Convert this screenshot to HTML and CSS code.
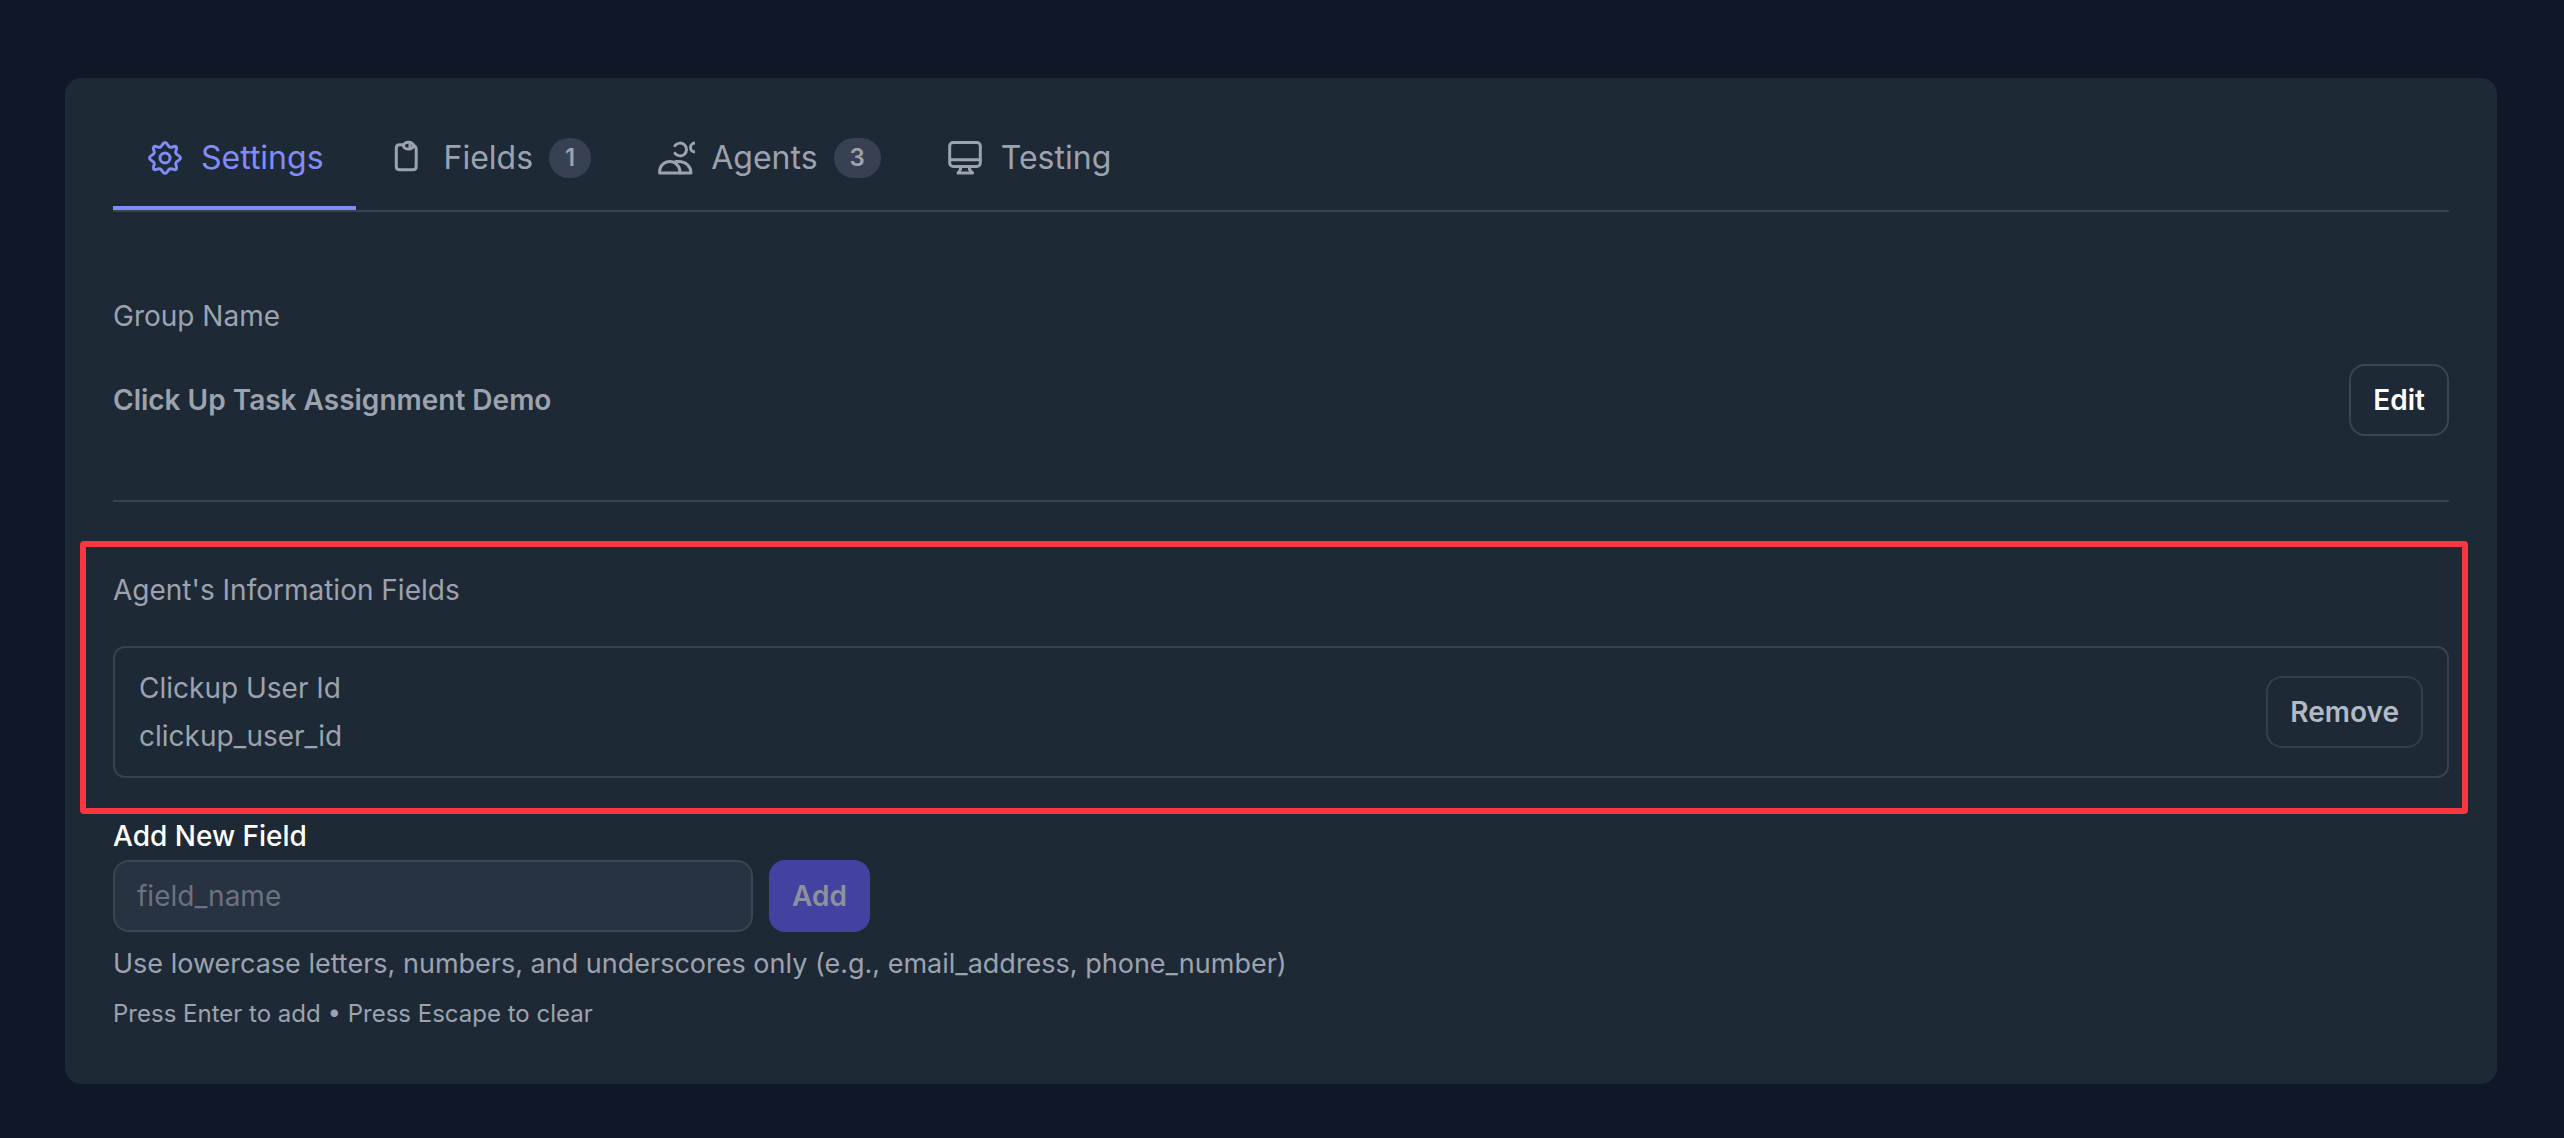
FILE: index.html
```html
<!DOCTYPE html>
<html lang="en">
<head>
<meta charset="utf-8">
<meta name="viewport" content="width=device-width, initial-scale=1">
<title>Group Settings</title>
<link rel="stylesheet" href="styles.css">
</head>
<body>
<main class="page">
  <div class="card">
    <nav class="tabs" aria-label="Group sections">
      <button class="tab tab-active" type="button">
        <svg class="icon" viewBox="0 0 40 40" aria-hidden="true">
          <path d="M20 4.500C22.600 4.500 22.800 8.500 25 9.200C27.200 10 29.400 7.100 31.200 8.800C32.900 10.600 30 12.800 30.800 15C31.500 17.200 35.500 17.400 35.500 20C35.500 22.600 31.500 22.800 30.800 25C30 27.200 32.900 29.400 31.200 31.200C29.400 32.900 27.200 30 25 30.800C22.800 31.500 22.600 35.500 20 35.500C17.400 35.500 17.200 31.500 15 30.800C12.800 30 10.600 32.900 8.800 31.200C7.100 29.400 10 27.200 9.200 25C8.500 22.800 4.500 22.600 4.500 20C4.500 17.400 8.500 17.200 9.200 15C10 12.800 7.100 10.600 8.800 8.800C10.600 7.100 12.800 10 15 9.200C17.200 8.500 17.400 4.500 20 4.500Z"/>
          <circle cx="20" cy="20" r="5"/>
        </svg>
        Settings
      </button>
      <button class="tab" type="button">
        <svg class="icon" viewBox="0 0 40 40" aria-hidden="true">
          <path d="M15 6.800H11.500Q8.300 6.800 8.300 10V28.600Q8.300 31.800 11.500 31.800H25Q28.200 31.800 28.200 28.600V11Q28.200 9 26.500 7.800"/>
          <ellipse cx="20.500" cy="7.700" rx="5" ry="3.400"/>
          <path d="M22 6.500V9"/>
        </svg>
        Fields
        <span class="badge">1</span>
      </button>
      <button class="tab" type="button">
        <svg class="icon" viewBox="0 0 40 40" aria-hidden="true">
          <path d="M20 7.700A6.400 6.400 0 1 1 20 15.300"/>
          <circle cx="40" cy="9.500" r="4.500"/>
          <path d="M4.600 35V33.500A10 10 0 0 1 14.500 23.500A10.500 10.500 0 0 1 25 33.500V35Z"/>
          <path d="M20.500 23.500H23.500C31 23.500 36 28.500 36 35H25"/>
        </svg>
        Agents
        <span class="badge">3</span>
      </button>
      <button class="tab" type="button">
        <svg class="icon" viewBox="0 0 40 40" aria-hidden="true">
          <rect x="4.700" y="4.500" width="30.600" height="24" rx="3.500"/>
          <path d="M5 21.700H35M15.500 29V31.500L13 35H27.500L24.500 31.500V29"/>
        </svg>
        Testing
      </button>
    </nav>

    <section class="group">
      <h2 class="label">Group Name</h2>
      <div class="row">
        <p class="group-name">Click Up Task Assignment Demo</p>
        <button class="btn btn-outline" type="button">Edit</button>
      </div>
    </section>

    <section class="highlight">
      <h2 class="label">Agent's Information Fields</h2>
      <div class="row field-item">
        <div class="field-text">
          <p>Clickup User Id</p>
          <p>clickup_user_id</p>
        </div>
        <button class="btn btn-outline btn-quiet" type="button">Remove</button>
      </div>
    </section>

    <form class="new-field">
      <label class="new-label" for="field-name">Add New Field</label>
      <div class="new-row">
        <input class="input" id="field-name" type="text" placeholder="field_name">
        <button class="btn btn-primary" type="submit" disabled>Add</button>
      </div>
      <p class="help">Use lowercase letters, numbers, and underscores only (e.g., email_address, phone_number)</p>
      <p class="hint">Press Enter to add • Press Escape to clear</p>
    </form>
  </div>
</main>
</body>
</html>
```

FILE: styles.css
```css
* {
  box-sizing: border-box;
}

body {
  margin: 0;
  background: #0f1826;
  color: #9ca3af;
  font-family: Inter, "Liberation Sans", sans-serif;
  font-size: 28px;
  line-height: 40px;
}

h2,
p {
  margin: 0;
  font-size: inherit;
}

button,
input {
  font: inherit;
}

.page {
  padding: 78px 67px 54px 65px;
}

.card {
  padding: 32px 48px 54px;
  border-radius: 16px;
  background: #1e2936;
}

.tabs {
  display: flex;
  border-bottom: 2px solid #374151;
}

.tab {
  display: flex;
  align-items: center;
  gap: 16px;
  padding: 28px 32px;
  border: 0;
  border-bottom: 4px solid transparent;
  background: none;
  color: #9ca3af;
  font-size: 32px;
  line-height: 40px;
}

.tab-active {
  border-color: #818cf8;
  color: #818cf8;
}

.icon {
  width: 40px;
  height: 40px;
  fill: none;
  stroke: currentColor;
  stroke-width: 3;
  stroke-linecap: round;
  stroke-linejoin: round;
}

.badge {
  padding: 0 16px;
  border-radius: 20px;
  background: #374151;
  font-size: 24px;
  font-weight: 600;
}

.row {
  display: flex;
  align-items: center;
  justify-content: space-between;
}

.label {
  font-weight: 400;
}

.group {
  display: grid;
  gap: 28px;
  padding: 84px 0 64px;
  border-bottom: 2px solid #374151;
}

.group-name {
  font-weight: 600;
}

.btn {
  height: 72px;
  padding: 0 23px;
  border: 0;
  border-radius: 16px;
  font-weight: 600;
}

.btn-outline {
  padding: 0 22px;
  border: 2px solid #3b4653;
  background: none;
  color: #ffffff;
}

.btn-quiet {
  border-color: #333e4b;
  color: #b2bac6;
}

.btn-primary {
  background: #4243a0;
  color: #8b929e;
}

.highlight {
  display: grid;
  gap: 36px;
  margin: 39px -19px 0 -33px;
  padding: 23px 13px 30px 27px;
  border: 6px solid #fb3640;
  border-radius: 4px;
}

.field-item {
  padding: 16px 24px;
  border: 2px solid #374151;
  border-radius: 12px;
}

.field-text {
  line-height: 48px;
}

.new-field {
  padding-top: 2px;
}

.new-label {
  display: block;
  color: #ffffff;
  font-weight: 500;
}

.new-row {
  display: flex;
  gap: 16px;
  margin-top: 4px;
}

.input {
  width: 640px;
  height: 72px;
  padding: 0 22px;
  border: 2px solid #3b4653;
  border-radius: 16px;
  background: #283341;
  color: #ffffff;
}

.input::placeholder {
  color: #6b7280;
  opacity: 1;
}

.help {
  margin-top: 12px;
  font-size: 27px;
}

.hint {
  margin-top: 14px;
  font-size: 24px;
  line-height: 32px;
}
```
